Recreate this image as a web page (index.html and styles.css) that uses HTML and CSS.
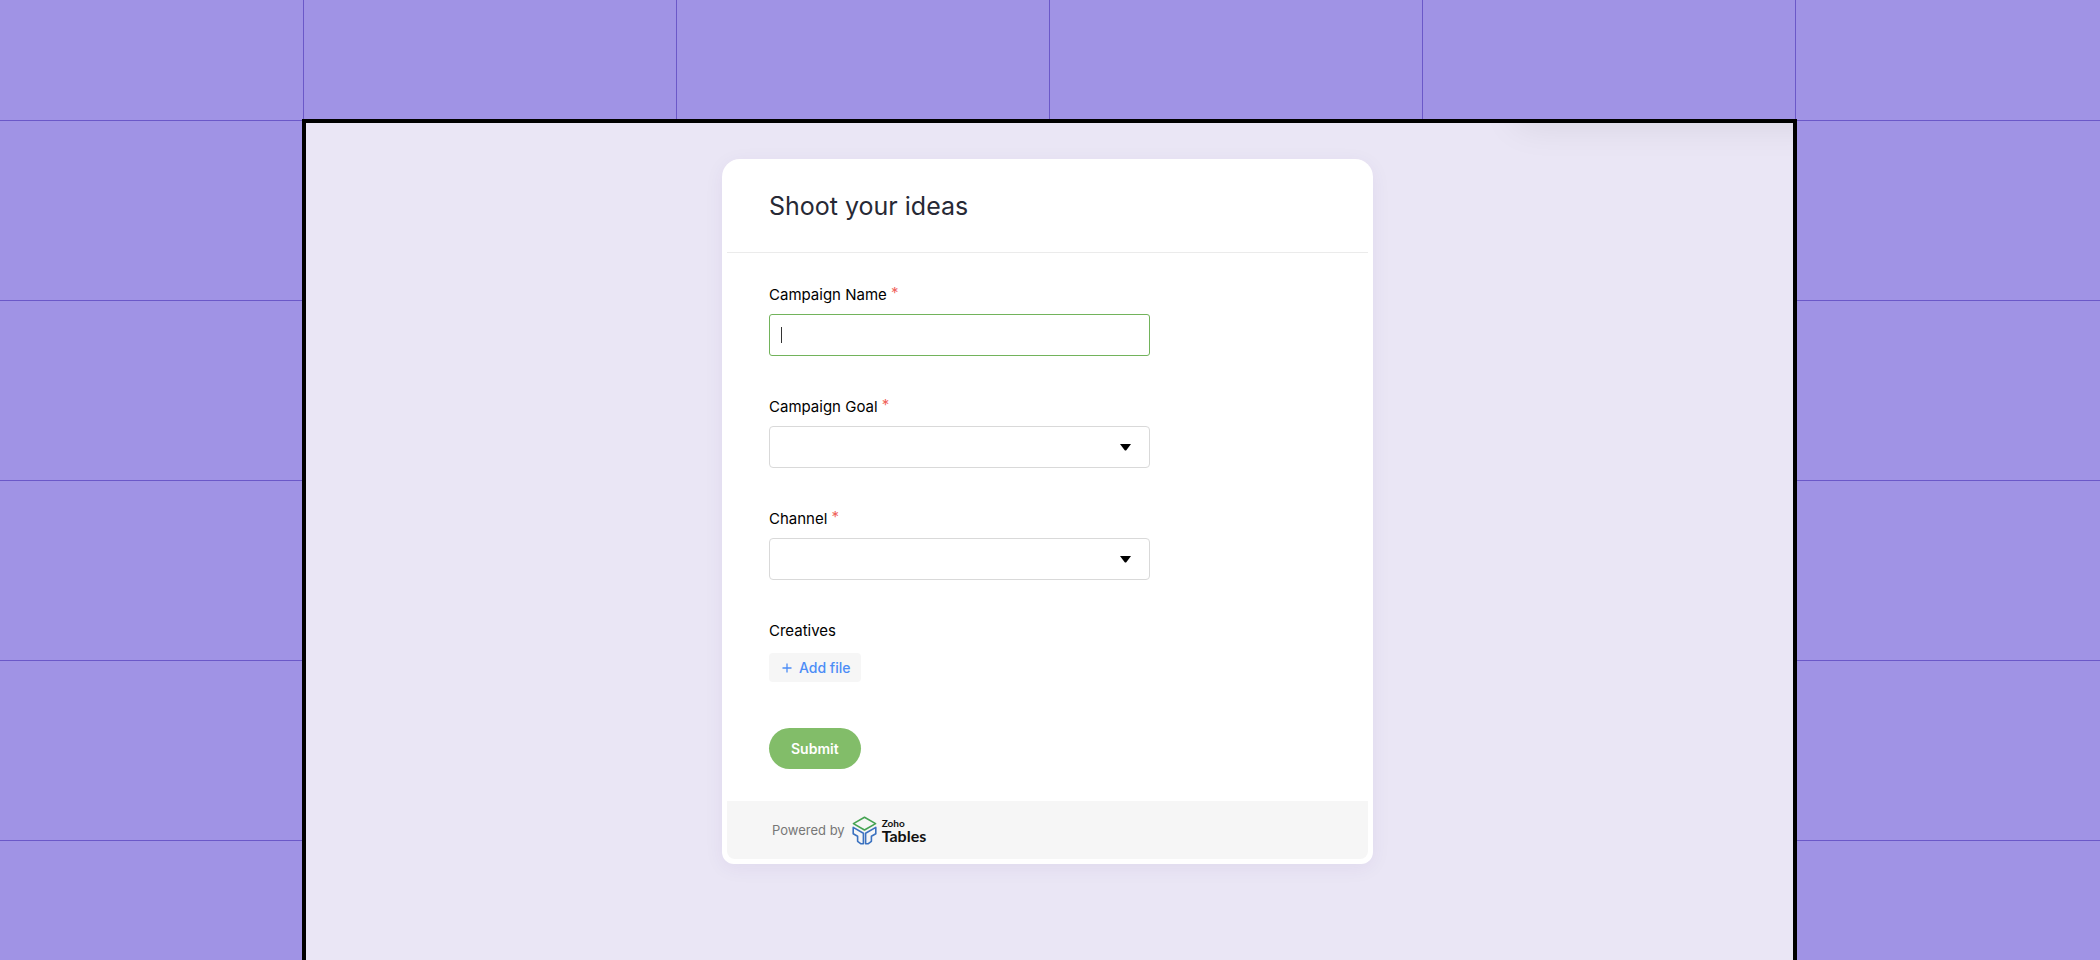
FILE: index.html
```
<!DOCTYPE html>
<html lang="en">
<head>
	<meta charset="UTF-8">
	<meta name="viewport" content="width=device-width, initial-scale=1.0">
	<title>Shoot your ideas</title>
	<link rel="stylesheet" href="styles.css">
</head>
<body>
	<main class="frame">
		<div class="top-shadow"></div>
		<form class="card">
			<header class="card-header">
				<h1>Shoot your ideas</h1>
			</header>

			<div class="fields">
				<div class="field">
					<label for="campaign-name">Campaign Name <span class="required">*</span></label>
					<input class="control active" type="text" id="campaign-name" required>
				</div>
				<div class="field">
					<label for="campaign-goal">Campaign Goal <span class="required">*</span></label>
					<div class="select-wrap">
						<select class="control" id="campaign-goal" required>
							<option value=""></option>
						</select>
						<svg class="arrow" viewBox="0 0 11 7"><path d="M0 0h11L6.5 6Q5.5 7 4.5 6Z"/></svg>
					</div>
				</div>
				<div class="field">
					<label for="channel">Channel <span class="required">*</span></label>
					<div class="select-wrap">
						<select class="control" id="channel" required>
							<option value=""></option>
						</select>
						<svg class="arrow" viewBox="0 0 11 7"><path d="M0 0h11L6.5 6Q5.5 7 4.5 6Z"/></svg>
					</div>
				</div>
				<div class="field">
					<label for="add-file">Creatives</label>
					<button class="add-file" type="button" id="add-file">
						<svg class="plus" viewBox="0 0 10 10"><path d="M5 0.5v9M0.5 5h9"/></svg>
						Add file
					</button>
				</div>
				<button class="submit" type="submit">Submit</button>
			</div>

			<footer class="card-footer">
				<span class="powered">Powered by</span>
				<a class="brand" href="#">
					<svg class="logo" viewBox="0 0 25 29">
						<path class="green" d="M12.5 1.2 23.6 7.6 12.5 14 1.4 7.6Z"/>
						<path class="blue" d="M1.2 11.4 11.4 17.2V27.8H9L5.6 25.3V20.2L1.2 17.8Z"/>
						<path class="blue" d="M23.8 11.4 13.6 17.2V27.8H16L19.4 25.3V20.2L23.8 17.8Z"/>
					</svg>
					<span class="brand-name">
						<span class="brand-top">Zoho</span>
						<span class="brand-main">Tables</span>
					</span>
				</a>
			</footer>
		</form>
	</main>
</body>
</html>
```
FILE: styles.css
```
* {
	box-sizing: border-box;
}

body {
	margin: 0;
	min-height: 100vh;
	padding: 119px 303px 0 302px;
	display: flex;
	background-color: #a093e5;
	background-image:
		linear-gradient(to right, #6b58c8 1px, transparent 1px),
		linear-gradient(to bottom, #6b58c8 1px, transparent 1px);
	background-size: 373px 180px;
	background-position: 303px 120px;
	color: #000;
	font-family: Inter, "Liberation Sans", sans-serif;
	font-size: 14px;
	line-height: 20px;
}

.frame {
	position: relative;
	flex: 1;
	overflow: hidden;
	border: 4px solid #000;
	border-bottom: 0;
	padding: 36px 4px 0 0;
	background-color: #eae6f5;
}

/* shadow of the panel above the form */
.top-shadow {
	position: absolute;
	top: -40px;
	right: -40px;
	width: 320px;
	height: 40px;
	border-radius: 16px;
	box-shadow: 0 4px 36px rgba(0, 0, 0, 0.08);
}

.card {
	width: 100%;
	max-width: 651px;
	margin: 0 auto;
	padding: 5px;
	border-radius: 18px 18px 12px 12px;
	background-color: #fff;
	box-shadow: 0 4px 20px rgba(60, 40, 120, 0.06);
}

.card-header {
	padding: 27px 42px 31px;
	border-bottom: 1px solid #ebebeb;
}

.card-header h1 {
	margin: 0;
	color: #272935;
	font-size: 25px;
	font-weight: 400;
	line-height: 30px;
}

.fields {
	padding: 32px 42px;
}

.field {
	max-width: 381px;
	margin-bottom: 41px;
}

.field label {
	display: block;
	margin-bottom: 9px;
	font-size: 15px;
}

.required {
	color: #f0645c;
	line-height: 1;
	vertical-align: 2px;
}

.control {
	display: block;
	width: 100%;
	height: 42px;
	padding: 0 12px;
	border: 1px solid #d9d9d9;
	border-radius: 4px;
	outline: none;
	background-color: #fff;
	font: inherit;
	appearance: none;
}

.control.active {
	border-color: #72b35b;
	border-radius: 3px;
	background-image: linear-gradient(#333, #333);
	background-size: 1px 16px;
	background-position: 11px center;
	background-repeat: no-repeat;
}

.select-wrap {
	position: relative;
}

.arrow {
	position: absolute;
	top: 18px;
	right: 19px;
	width: 11px;
	height: 7px;
	pointer-events: none;
}

.add-file {
	display: flex;
	align-items: center;
	gap: 7px;
	height: 29px;
	margin: 12px 0 46px;
	padding: 0 10px 0 13px;
	border: 0;
	border-radius: 4px;
	background-color: #f6f6f6;
	color: #4c8df6;
	font: inherit;
	font-weight: 500;
	cursor: pointer;
}

.plus {
	width: 10px;
	height: 10px;
	fill: none;
	stroke: #4c8df6;
	stroke-width: 1.3;
}

.submit {
	height: 41px;
	padding: 0 22px;
	border: 0;
	border-radius: 21px;
	background-color: #82bd69;
	color: #fff;
	font: inherit;
	font-weight: 600;
	cursor: pointer;
}

.card-footer {
	display: flex;
	align-items: center;
	gap: 7px;
	height: 58px;
	padding: 0 45px;
	border-radius: 0 0 8px 8px;
	background-color: #f6f6f6;
}

.powered {
	color: #777;
	font-size: 13px;
}

.brand {
	display: flex;
	align-items: center;
	gap: 5px;
	color: #111;
	text-decoration: none;
}

.logo {
	width: 25px;
	height: 29px;
	fill: none;
	stroke-width: 1.6;
	stroke-linejoin: round;
}

.green {
	stroke: #45a352;
}

.blue {
	stroke: #3b72c0;
}

.brand-name {
	display: flex;
	flex-direction: column;
	font-family: Lato, "Liberation Sans", sans-serif;
	font-weight: 700;
}

.brand-top {
	font-size: 10px;
	line-height: 10px;
}

.brand-main {
	font-size: 16px;
	line-height: 15px;
}
```
